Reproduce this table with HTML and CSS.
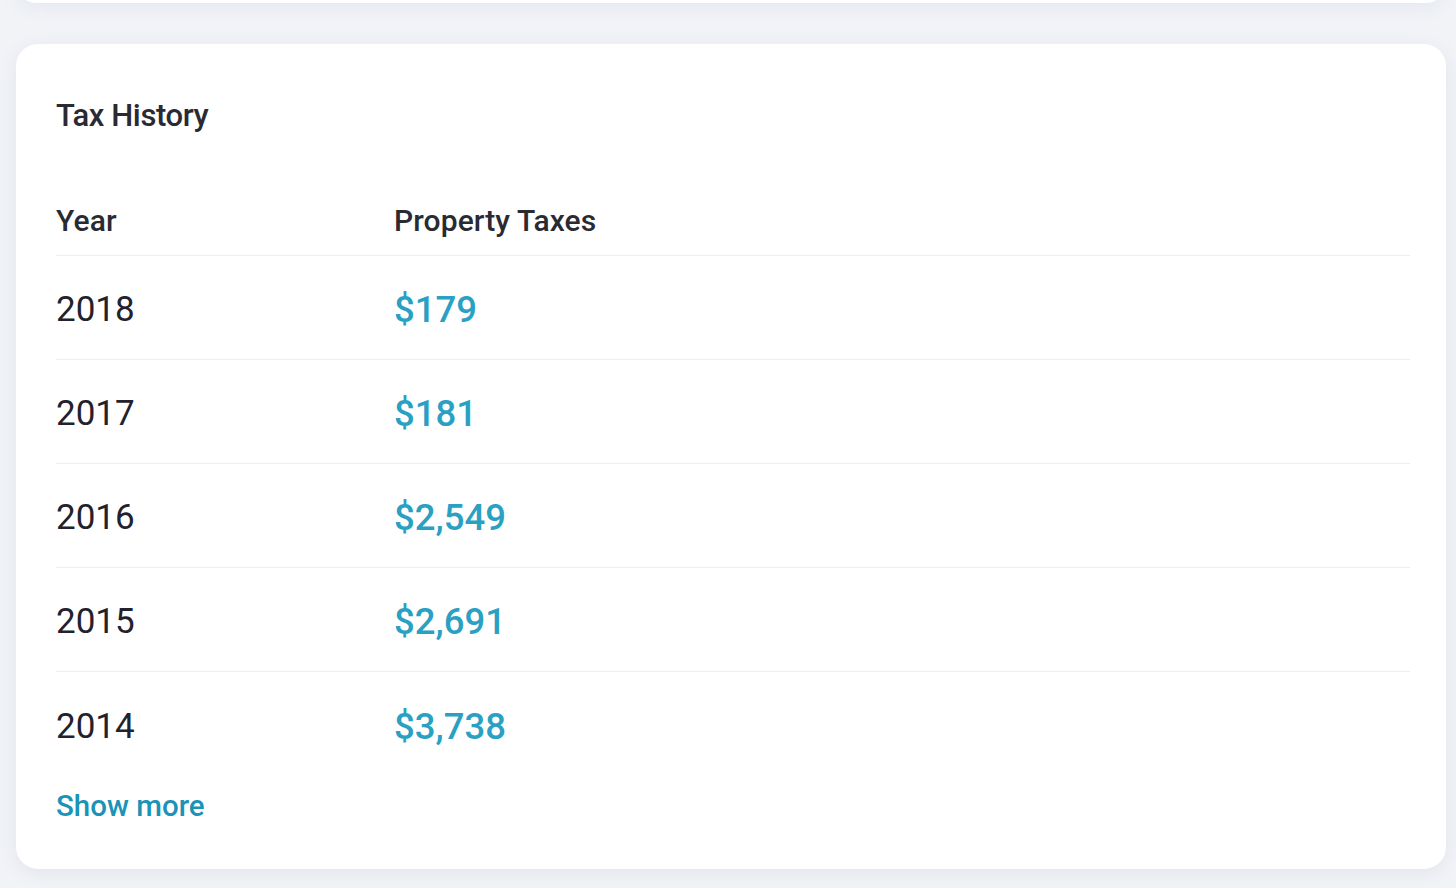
FILE: index.html
```html
<!DOCTYPE html>
<html lang="en">
<head>
<meta charset="utf-8">
<title>Tax History</title>
<link rel="stylesheet" href="styles.css">
</head>
<body>
<div class="prev-card"></div>
<section class="card">
  <h2 class="title">Tax History</h2>
  <div class="table">
    <div class="row head">
      <div class="col-year">Year</div>
      <div class="col-tax">Property Taxes</div>
    </div>
    <div class="row">
      <div class="col-year">2018</div>
      <div class="col-tax amount">$179</div>
    </div>
    <div class="row">
      <div class="col-year">2017</div>
      <div class="col-tax amount">$181</div>
    </div>
    <div class="row">
      <div class="col-year">2016</div>
      <div class="col-tax amount">$2,549</div>
    </div>
    <div class="row">
      <div class="col-year">2015</div>
      <div class="col-tax amount">$2,691</div>
    </div>
    <div class="row last">
      <div class="col-year">2014</div>
      <div class="col-tax amount">$3,738</div>
    </div>
  </div>
  <a class="more" href="#">Show more</a>
</section>
</body>
</html>
```
FILE: styles.css
```css
html, body {
  margin: 0;
  padding: 0;
  background: #f1f3f7;
  font-family: Roboto, "Noto Sans", "Liberation Sans", sans-serif;
  color: #22222e;
}
body {
  padding: 0 10px 0 16px;
  height: 888px;
  overflow: hidden;
  box-sizing: border-box;
}
.prev-card {
  height: 24px;
  margin-top: -21px;
  background: #fff;
  border-radius: 0 0 20px 20px;
  box-shadow: 0 4px 18px rgba(120, 135, 165, 0.10);
}
.card {
  margin-top: 41px;
  height: 825px;
  box-sizing: border-box;
  background: #fff;
  border-radius: 22px;
  box-shadow: 0 4px 18px rgba(120, 135, 165, 0.12);
  padding: 40px 36px 0 40px;
}
.title {
  margin: 0;
  height: 64px;
  line-height: 64px;
  font-size: 31px;
  font-weight: 500;
  letter-spacing: -0.4px;
  color: #2a2a33;
}
.table {
  margin-top: 38px;
}
.row {
  display: flex;
  align-items: center;
  height: 104px;
  padding-top: 4px;
  border-bottom: 1px solid #eceef0;
  box-sizing: border-box;
}
.row.head {
  height: 70px;
  padding-top: 0;
}
.row.last {
  border-bottom: none;
}
.col-year {
  width: 338px;
  flex: none;
  font-size: 35px;
}
.col-tax {
  font-size: 36.5px;
}
.head .col-year, .head .col-tax {
  font-size: 30px;
  font-weight: 500;
  letter-spacing: 0.1px;
  color: #2a2a33;
}
.amount {
  color: #2aa1c3;
  font-weight: 500;
}
.more {
  display: block;
  margin-top: 12px;
  line-height: 36px;
  font-size: 29.5px;
  font-weight: 500;
  color: #1a93b7;
  text-decoration: none;
  width: max-content;
}
```
